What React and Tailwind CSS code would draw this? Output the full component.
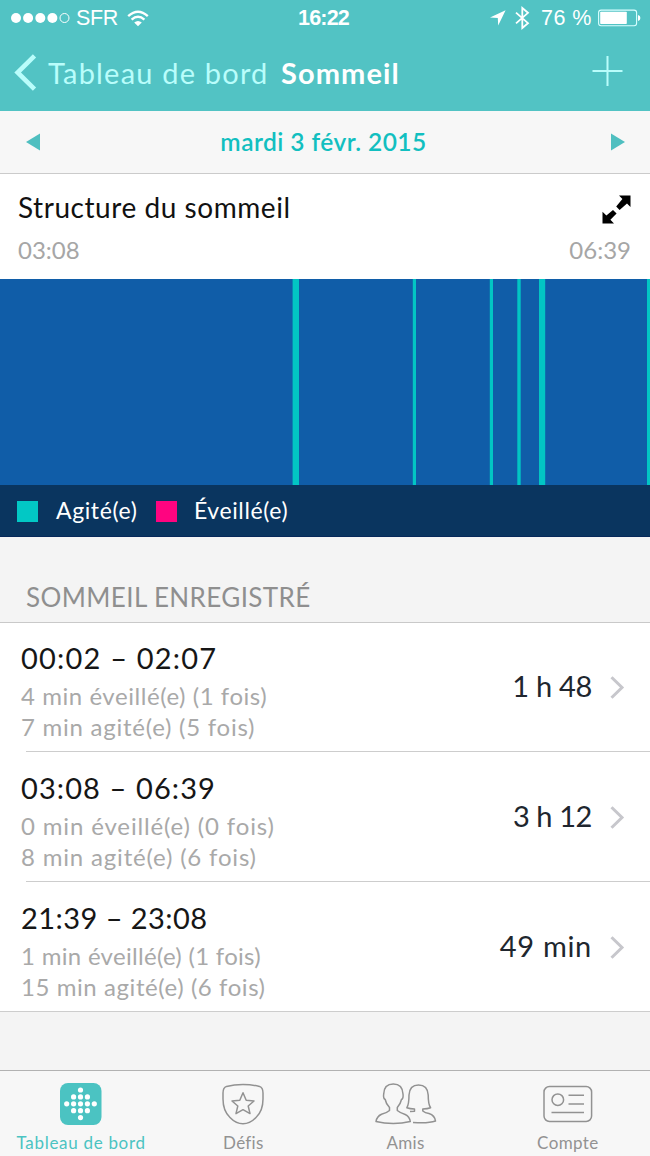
const sleepBars = [
  { x: 292.6, w: 6.4 },
  { x: 412.8, w: 3.2 },
  { x: 489.8, w: 3.2 },
  { x: 517.3, w: 3.4 },
  { x: 539, w: 6.2 },
  { x: 647, w: 3 },
];

const records = [
  {
    time: "00:02 – 02:07", timeCls: "tracking-[1.2px]",
    awake: "4 min éveillé(e) (1 fois)", awakeCls: "tracking-[0.55px]",
    restless: "7 min agité(e) (5 fois)", restlessCls: "tracking-[0.75px]",
    total: "1 h 48", totalCls: "tracking-[-0.3px]",
  },
  {
    time: "03:08 – 06:39", timeCls: "tracking-[1.1px]",
    awake: "0 min éveillé(e) (0 fois)", awakeCls: "tracking-[0.85px]",
    restless: "8 min agité(e) (6 fois)", restlessCls: "tracking-[0.82px]",
    total: "3 h 12", totalCls: "tracking-[-0.4px]",
  },
  {
    time: "21:39 – 23:08", timeCls: "tracking-[0.45px]",
    awake: "1 min éveillé(e) (1 fois)", awakeCls: "tracking-[0.3px]",
    restless: "15 min agité(e) (6 fois)", restlessCls: "tracking-[0.57px]",
    total: "49 min", totalCls: "tracking-[0.7px]",
  },
];

const logoDots = [
  [20.5, 7], [13.6, 13.9], [20.5, 13.9], [27.4, 13.9],
  [6.7, 20.8], [13.6, 20.8], [20.5, 20.8], [27.4, 20.8], [34.3, 20.8],
  [13.6, 27.7], [20.5, 27.7], [27.4, 27.7], [20.5, 34.6],
];

function StatusBar() {
  return (
    <div className="relative flex h-9 items-center justify-between pl-[11px] pr-[9px] font-['Liberation_Sans',sans-serif] text-[21.5px] leading-none text-white">
      <div className="flex items-center">
        <svg width="60" height="12" viewBox="0 0 60 12" fill="white">
          <circle cx="5" cy="6" r="5" />
          <circle cx="17.1" cy="6" r="5" />
          <circle cx="29.3" cy="6" r="5" />
          <circle cx="41.4" cy="6" r="5" />
          <circle cx="53.5" cy="6" r="4.5" fill="none" stroke="white" />
        </svg>
        <span className="ml-[5px] pt-0.5 tracking-[-0.3px]">SFR</span>
        <svg className="ml-[9px]" width="22" height="17" viewBox="0 0 22 17" fill="none" stroke="white" strokeWidth="2.4">
          <path d="M1.2 6.2 Q11 -2.6 20.8 6.2" />
          <path d="M4.6 9.7 Q11 4 17.4 9.7" />
          <path d="M11 16.3 L7.2 12.4 Q11 9.4 14.8 12.4 Z" fill="white" stroke="none" />
        </svg>
      </div>
      <span className="absolute left-[298px] pt-0.5 font-bold tracking-[-0.8px]">16:22</span>
      <div className="flex items-center">
        <svg width="16" height="16" viewBox="0 0 16 16" fill="white">
          <path d="M15.6 0.2 L8.2 15.6 L7.8 8 L0 7.4 Z" />
        </svg>
        <svg className="ml-[9px]" width="15" height="24" viewBox="0 0 15 24" fill="none" stroke="white" strokeWidth="1.8">
          <path d="M1 6.6 L13 17.2 L7.3 22 V2 L13 6.8 L1 17.4" />
        </svg>
        <span className="ml-[11px] pt-0.5 tracking-[0.5px]">76 %</span>
        <svg className="ml-[6px]" width="43" height="18" viewBox="0 0 43 18">
          <rect x="0.6" y="1.1" width="38" height="15.6" rx="2.5" fill="none" stroke="#d9ffff" strokeWidth="1.1" />
          <rect x="2.2" y="2.7" width="26.6" height="12.4" rx="0.8" fill="white" />
          <path d="M40 6 Q42.4 6.4 42.4 9 Q42.4 11.6 40 12 Z" fill="white" />
        </svg>
      </div>
    </div>
  );
}

function Header() {
  return (
    <header className="h-[111px] shrink-0 bg-[#52c3c4]">
      <StatusBar />
      <div className="flex h-[73px] items-center pr-[27px] pl-3.5 text-[29px] leading-none">
        <svg width="23" height="37" viewBox="0 0 23 37" fill="none" stroke="#b9fdfb" strokeWidth="4.6">
          <path d="M20.5 1.8 L3.6 18.5 L20.5 35.2" />
        </svg>
        <span className="ml-[11px] w-[222px] pb-px tracking-[1.2px] whitespace-nowrap text-[#b9fdfb]">Tableau de bord</span>
        <span className="ml-[11px] pb-px font-bold tracking-[1.1px] text-white">Sommeil</span>
        <svg className="mb-[3px] ml-auto" width="31" height="32" viewBox="0 0 31 32" stroke="#b9fdfb" strokeWidth="2">
          <path d="M0.5 16 H30.5 M15.5 1 V31" />
        </svg>
      </div>
    </header>
  );
}

function DateBar() {
  return (
    <div className="flex h-[63px] shrink-0 items-center justify-between border-b border-[#cbcbcb] bg-[#f7f7f7] pr-[25px] pl-[26px]">
      <svg width="14" height="18" viewBox="0 0 14 18" fill="#4fbfc0">
        <path d="M14 0.5 V17.5 L0 9 Z" />
      </svg>
      <span className="-ml-1 text-[24.5px] leading-none font-semibold tracking-[0.45px] text-[#12bfc0]">mardi 3 févr. 2015</span>
      <svg width="14" height="18" viewBox="0 0 14 18" fill="#4fbfc0">
        <path d="M0 0.5 V17.5 L14 9 Z" />
      </svg>
    </div>
  );
}

function SleepPattern() {
  return (
    <section className="shrink-0 bg-white">
      <div className="flex h-[105px] flex-col pt-[17px] pr-[19px] pl-[18px]">
        <div className="flex items-start justify-between">
          <h2 className="text-[28px] leading-8 tracking-[0.55px] text-[#111]">Structure du sommeil</h2>
          <svg className="mt-1" width="29" height="29" viewBox="0 0 29 29">
            <path d="M17 0.5 H28.5 V12 L25 8.6 L17.6 15 L14.2 11.6 L20.4 4 Z M0.5 16.8 V28.5 H12 L8.4 24.8 L14.6 18.4 L11 15 L4.4 20.6 Z" fill="black" />
          </svg>
        </div>
        <div className="mt-2.5 flex justify-between text-[24px] leading-8 text-[#a6a6a6]">
          <span>03:08</span>
          <span>06:39</span>
        </div>
      </div>
      <svg className="block" width="650" height="206" viewBox="0 0 650 206">
        <rect width="650" height="206" fill="#105da8" />
        {sleepBars.map((bar) => (
          <rect key={bar.x} x={bar.x} width={bar.w} height="206" fill="#02c5c4" />
        ))}
      </svg>
      <div className="flex h-[52px] items-center border-b border-[#06285a] bg-[#0a355f] pt-px pl-[17px] text-[23px] leading-none tracking-[0.6px] text-white">
        <span className="size-[21px] bg-[#02c8c5]" />
        <span className="ml-[18px] w-[82px] pb-px">Agité(e)</span>
        <span className="ml-[18px] size-[21px] bg-[#ff0480]" />
        <span className="ml-[17px] pb-px">Éveillé(e)</span>
      </div>
    </section>
  );
}

function RecordRow({ record, first, last }) {
  return (
    <li className="bg-white">
      <div className={`flex items-center pr-[25px] pl-[21px] ${first ? "h-[128px]" : "h-[129px] pt-px"}`}>
        <div className="flex flex-1 flex-col pt-[5px]">
          <span className={`text-[29px] leading-10 text-[#161616] ${record.timeCls}`}>{record.time}</span>
          <span className={`mt-0.5 text-[24px] leading-[31px] text-[#a9a9a9] ${record.awakeCls}`}>{record.awake}</span>
          <span className={`text-[24px] leading-[31px] text-[#a9a9a9] ${record.restlessCls}`}>{record.restless}</span>
        </div>
        <span className={`pb-[3px] text-[29px] leading-none text-[#20262e] ${record.totalCls}`}>{record.total}</span>
        <svg className="ml-[18px]" width="15" height="23" viewBox="0 0 15 23" fill="none" stroke="#c7c7cc" strokeWidth="3">
          <path d="M1.5 1.2 L12 11.5 L1.5 21.8" />
        </svg>
      </div>
      <div className={last ? "h-px bg-[#cdcdcd]" : "ml-[26px] h-px bg-[#cdcdcd]"} />
    </li>
  );
}

function Tab({ label, active, labelCls, children }) {
  return (
    <div className={`flex flex-1 flex-col items-center pt-3 ${active ? "text-[#4bc3c2]" : "text-[#929292]"}`}>
      <div className="flex h-[42px] items-center">{children}</div>
      <span className={`mt-[7px] text-[17px] leading-[21px] whitespace-nowrap ${labelCls}`}>{label}</span>
    </div>
  );
}

function TabBar() {
  return (
    <nav className="flex h-[86px] shrink-0 border-t border-[#b2b2b2] bg-[#f7f7f7] pr-px">
      <Tab label="Tableau de bord" active labelCls="tracking-[0.7px]">
        <svg width="42" height="42" viewBox="0 0 42 42">
          <rect width="41.5" height="42" rx="8" fill="#4bc3c2" />
          {logoDots.map(([x, y]) => (
            <circle key={`${x}-${y}`} cx={x} cy={y} r="2.6" fill="white" />
          ))}
        </svg>
      </Tab>
      <Tab label="Défis" labelCls="tracking-[0.3px]">
        <svg width="42" height="42" viewBox="0 0 42 42" fill="none" stroke="currentColor" strokeWidth="1.5">
          <path d="M1 10 Q1 4.6 4.5 3.4 Q12 1.6 21 1.6 Q30 1.6 37.5 3.4 Q41 4.6 41 10 V16 Q41 28 34 34.5 Q28 40.8 21 40.8 Q14 40.8 8 34.5 Q1 28 1 16 Z" />
          <path d="M21 9.8 L24.2 17.2 L32 18 L26.2 23 L28 30.6 L21 26.7 L14 30.6 L15.8 23 L10 18 L17.8 17.2 Z" strokeLinejoin="round" />
        </svg>
      </Tab>
      <Tab label="Amis" labelCls="tracking-[0.3px]">
        <svg width="62" height="42" viewBox="0 0 62 42" fill="none" stroke="currentColor" strokeWidth="1.5" strokeLinejoin="round">
          <path d="M14.5 27.5 V24.5 Q11 21 10.2 16.5 Q8 15.5 8.7 11 Q9 1 18.3 1 Q27.5 1 28 11 Q28.6 15.5 26.5 16.5 Q25.5 21 22.3 24.5 V27.5 Q25 29.8 30.2 31.5 Q34.5 33.5 35.3 38.5 Q27 40.5 18.3 40.5 Q9 40.5 1 38.5 Q1.8 33.5 6.5 31.3 Q12 29.8 14.5 27.5 Z" />
          <path d="M35 28.6 L39.5 28.2 V26 Q35 26 31.8 24.8 Q34 21.5 34 12 Q34.6 2 43.5 2 Q52.6 2 53.2 12 Q53.2 21.5 55.6 24.8 Q52.5 26 47.8 26 V28 Q50 29.8 54 30.5 Q59.8 32.5 60.5 38 Q53 40.6 38 39.4" />
        </svg>
      </Tab>
      <Tab label="Compte" labelCls="tracking-[0.4px]">
        <svg width="50" height="42" viewBox="0 0 50 42" fill="none" stroke="currentColor" strokeWidth="1.5">
          <rect x="1" y="3.5" width="47.6" height="35" rx="5.5" />
          <circle cx="14.8" cy="16.7" r="5.8" />
          <path d="M25.5 12.3 H41 M25.5 21 H41 M8.5 29.6 H41" />
        </svg>
      </Tab>
    </nav>
  );
}

export default function App() {
  return (
    <div className="flex h-[1156px] w-[650px] flex-col overflow-hidden bg-[#f4f4f4] font-[Lato,sans-serif]">
      <Header />
      <DateBar />
      <SleepPattern />
      <div className="flex h-[86px] shrink-0 items-end border-b border-[#c9c9c9] pb-[9px] pl-[26px]">
        <h3 className="text-[26px] leading-8 tracking-[0.4px] text-[#8f8f8f]">SOMMEIL ENREGISTRÉ</h3>
      </div>
      <ul className="flex-1">
        {records.map((record, i) => (
          <RecordRow key={record.time} record={record} first={i === 0} last={i === records.length - 1} />
        ))}
      </ul>
      <TabBar />
    </div>
  );
}
